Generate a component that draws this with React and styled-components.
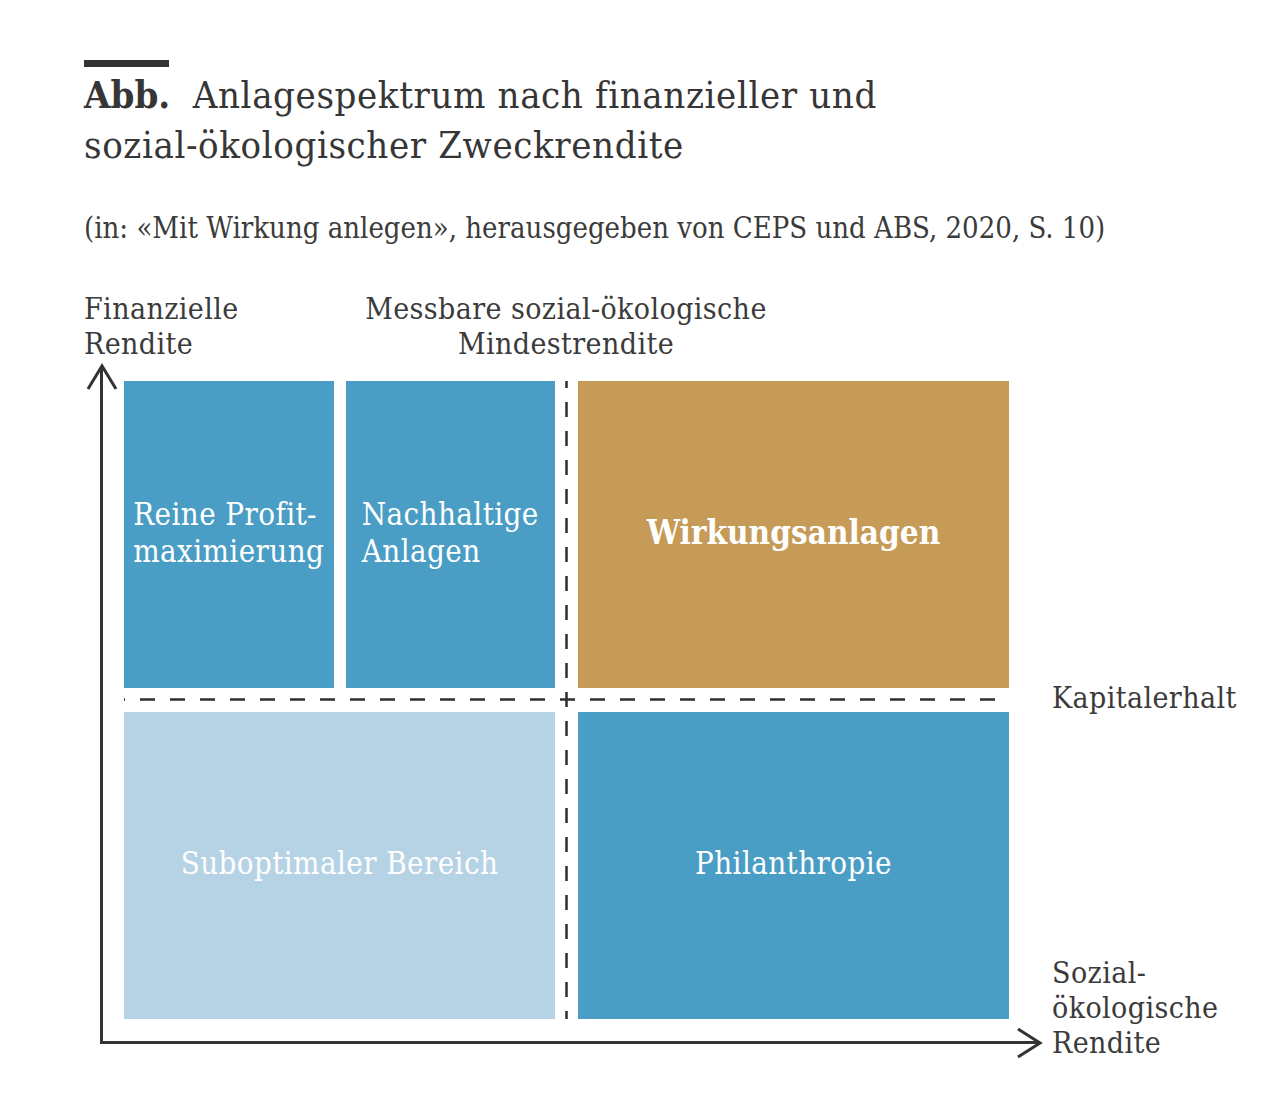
import React from "react";
import styled, { createGlobalStyle } from "styled-components";

const Global = createGlobalStyle`
  html, body { margin: 0; padding: 0; background: #ffffff; }
`;

const FONT = `"DejaVu Serif Condensed", "DejaVu Serif", serif`;

const Page = styled.div`
  padding: 60px 0 40px 84px;
  font-family: ${FONT};
  font-stretch: condensed;
  color: #3b3b3b;
`;

const Rule = styled.div`
  width: 85px;
  height: 7px;
  background: #333333;
`;

const Title = styled.h1`
  margin: 3px 0 0;
  font-size: 38px;
  line-height: 50px;
  font-weight: 400;
  letter-spacing: 0.6px;
  color: #363636;
`;

const Abb = styled.span`
  font-weight: 700;
  letter-spacing: 0;
  margin-right: 11px;
`;

const Source = styled.p`
  margin: 40px 0 0;
  font-size: 29px;
  line-height: 36px;
`;

const Header = styled.div`
  margin-top: 45px;
  display: grid;
  grid-template-columns: 267px 430px;
  font-size: 30px;
  line-height: 35px;
  letter-spacing: 0.4px;
`;

const AxisLabel = styled.div`
  text-align: ${(p) => p.$align || "left"};
`;

const PlotRow = styled.div`
  margin-top: 6px;
  display: flex;
  align-items: flex-start;
  gap: 12px;
`;

const Frame = styled.div`
  position: relative;
  margin-left: 16px;
  width: 940px;
  box-sizing: border-box;
  padding: 14px 31px 22px 21px;
  border-left: 3px solid #333333;
  border-bottom: 3px solid #333333;
`;

const ArrowSvg = styled.svg`
  position: absolute;
  overflow: visible;
`;

const Quadrants = styled.div`
  position: relative;
  display: grid;
  grid-template-columns: 431px 431px;
  grid-template-rows: 307px 307px;
  column-gap: 23px;
  row-gap: 24px;
`;

const SplitCell = styled.div`
  display: flex;
  gap: 12px;
`;

const Box = styled.div`
  flex: 1;
  display: flex;
  align-items: center;
  justify-content: center;
  background: ${(p) => p.$bg};
  color: #ffffff;
  font-size: ${(p) => p.$size || 31}px;
  font-weight: ${(p) => p.$weight || 400};
  letter-spacing: ${(p) => (p.$weight ? 0 : 0.4)}px;
  line-height: 37px;
  text-align: left;
`;

const BoxText = styled.span`
  display: inline-block;
  margin-top: -4px;
`;

const DashLayer = styled.svg`
  position: absolute;
  left: 0;
  top: 0;
  width: 885px;
  height: 638px;
  pointer-events: none;
`;

const Side = styled.div`
  display: flex;
  flex-direction: column;
  font-size: 30px;
  line-height: 35px;
  letter-spacing: 0.4px;
`;

const SideLabel = styled.div`
  margin-top: ${(p) => p.$top}px;
`;

const BLUE = "#4a9dc4";
const GOLD = "#c59b57";
const LIGHT = "#b6d2e5";

export default function App() {
  return (
    <>
      <Global />
      <Page>
        <Rule />
        <Title>
          <Abb>Abb.</Abb> Anlagespektrum nach finanzieller und
          <br />
          sozial-ökologischer Zweckrendite
        </Title>
        <Source>
          (in: «Mit Wirkung anlegen», herausgegeben von CEPS und ABS, 2020, S. 10)
        </Source>
        <Header>
          <AxisLabel>
            Finanzielle
            <br />
            Rendite
          </AxisLabel>
          <AxisLabel $align="center">
            Messbare sozial-ökologische
            <br />
            Mindestrendite
          </AxisLabel>
        </Header>
        <PlotRow>
          <Frame>
            <ArrowSvg width="32" height="26" style={{ left: -17.5, top: -2 }}>
              <polyline
                points="2,24 16,1 30,24"
                fill="none"
                stroke="#333333"
                strokeWidth="3"
              />
            </ArrowSvg>
            <ArrowSvg width="26" height="32" style={{ right: -2, bottom: -17.5 }}>
              <polyline
                points="2,2 24,16 2,30"
                fill="none"
                stroke="#333333"
                strokeWidth="3"
              />
            </ArrowSvg>
            <Quadrants>
              <SplitCell>
                <Box $bg={BLUE}>
                  <BoxText>
                    Reine Profit-
                    <br />
                    maximierung
                  </BoxText>
                </Box>
                <Box $bg={BLUE}>
                  <BoxText>
                    Nachhaltige
                    <br />
                    Anlagen
                  </BoxText>
                </Box>
              </SplitCell>
              <Box $bg={GOLD} $size={33} $weight={700}>
                <BoxText>Wirkungsanlagen</BoxText>
              </Box>
              <Box $bg={LIGHT}>
                <BoxText>Suboptimaler Bereich</BoxText>
              </Box>
              <Box $bg={BLUE}>
                <BoxText>Philanthropie</BoxText>
              </Box>
              <DashLayer viewBox="0 0 885 638">
                <line
                  x1="442.5"
                  y1="0"
                  x2="442.5"
                  y2="638"
                  stroke="#2e2e2e"
                  strokeWidth="2.5"
                  strokeDasharray="15 14"
                  strokeDashoffset="8"
                />
                <line
                  x1="0"
                  y1="318.5"
                  x2="885"
                  y2="318.5"
                  stroke="#2e2e2e"
                  strokeWidth="2.5"
                  strokeDasharray="15 15"
                  strokeDashoffset="14"
                />
              </DashLayer>
            </Quadrants>
          </Frame>
          <Side>
            <SideLabel $top={313}>Kapitalerhalt</SideLabel>
            <SideLabel $top={240}>
              Sozial-
              <br />
              ökologische
              <br />
              Rendite
            </SideLabel>
          </Side>
        </PlotRow>
      </Page>
    </>
  );
}
